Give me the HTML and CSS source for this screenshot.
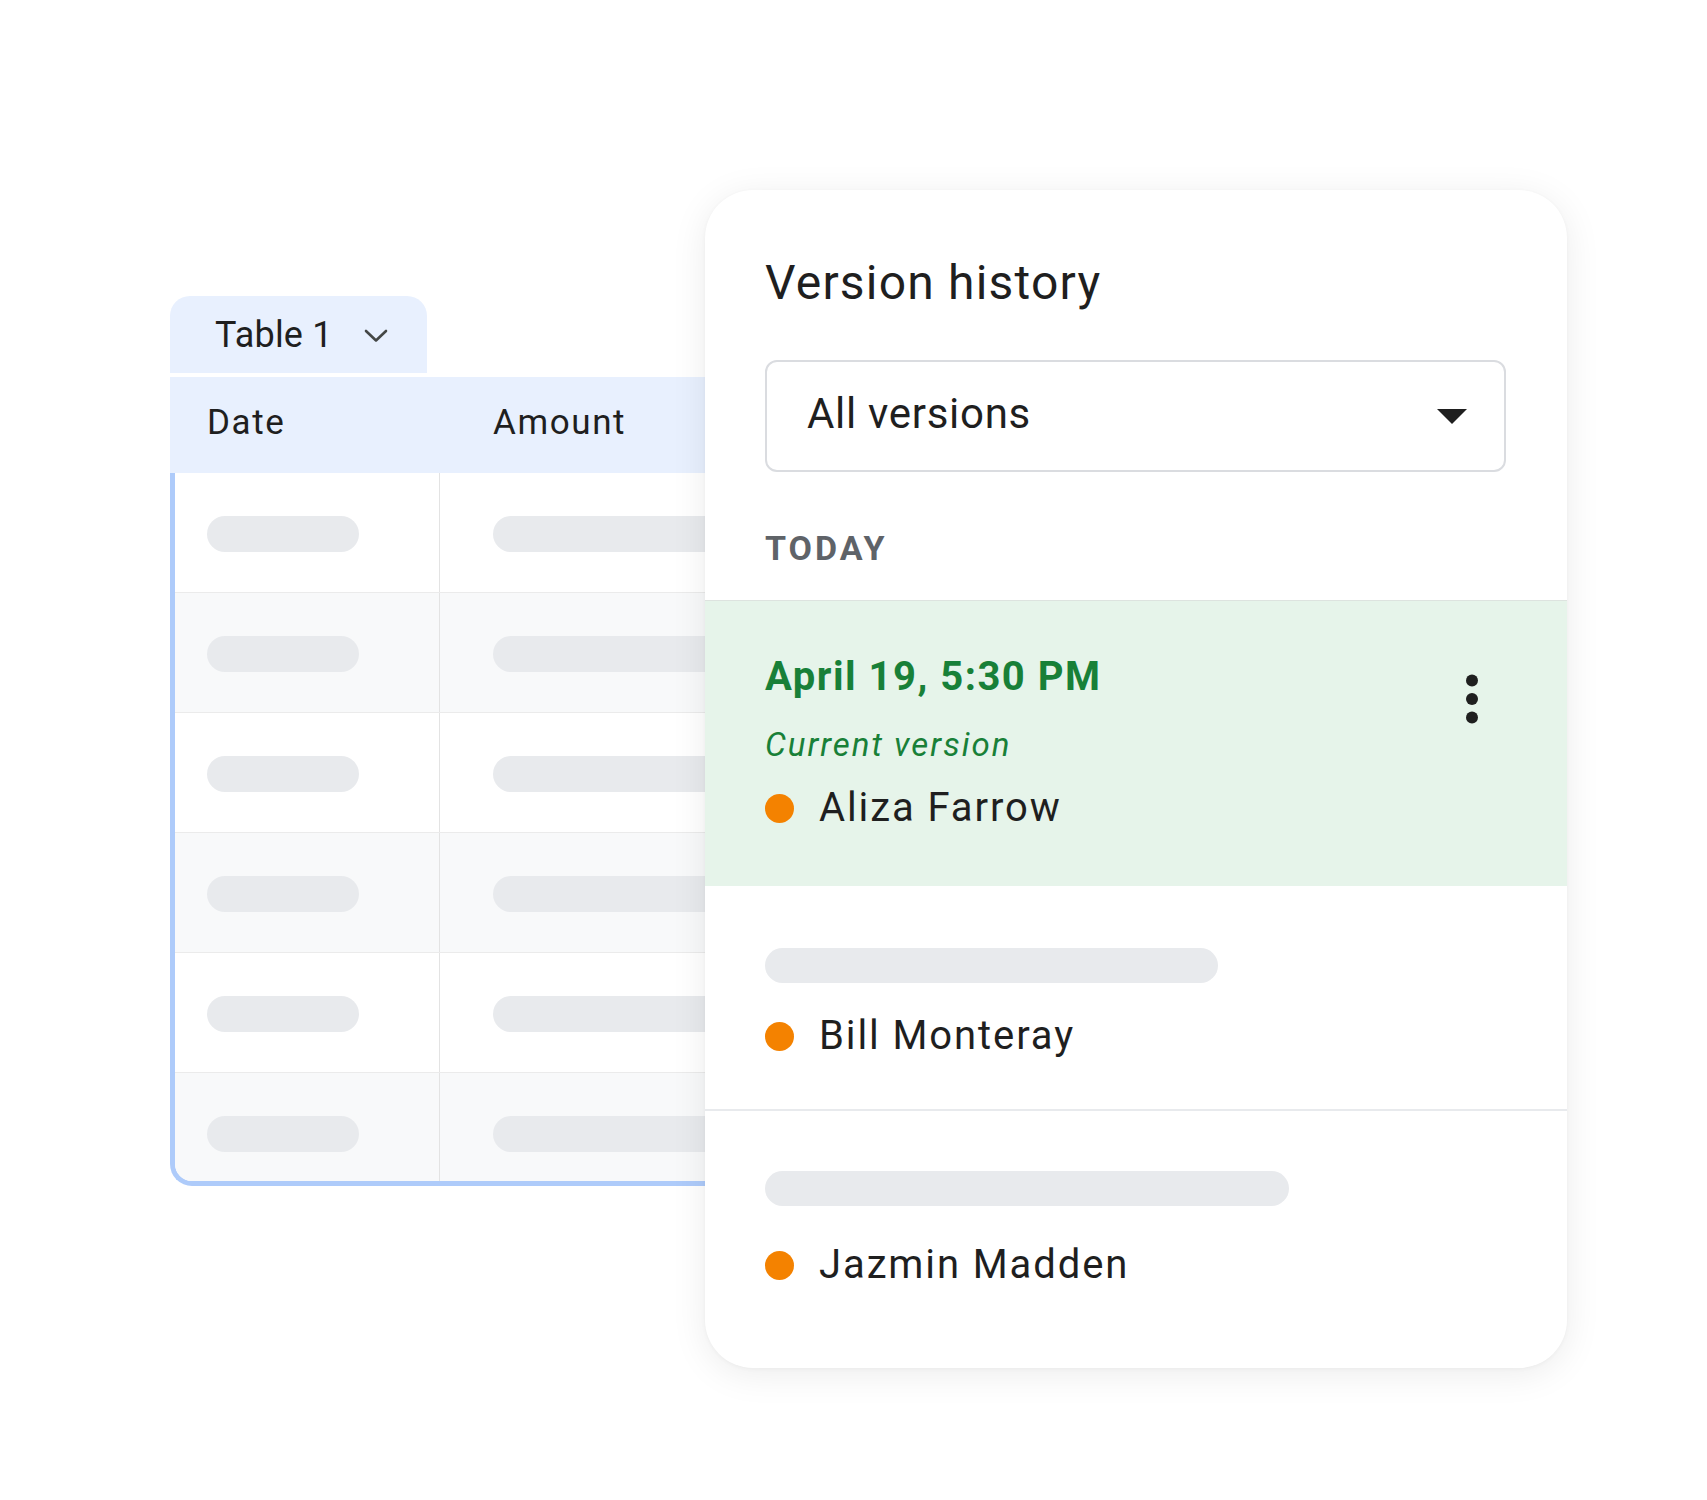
FILE: index.html
```html
<!DOCTYPE html>
<html lang="en">
<head>
<meta charset="utf-8">
<title>Version history</title>
<link rel="stylesheet" href="styles.css">
</head>
<body>
<div class="stage">
  <div class="sheet">
    <div class="tab">
      <span class="tab-label">Table 1</span>
      <svg class="chev" width="24" height="14" viewBox="0 0 24 14"><path d="M2 2 L12 11.5 L22 2" fill="none" stroke="#444746" stroke-width="2.6" stroke-linecap="round" stroke-linejoin="round"/></svg>
    </div>
    <div class="head">
      <div class="hcell c1">Date</div>
      <div class="hcell c2">Amount</div>
    </div>
    <div class="body">
      <div class="row"><div class="cell c1"><span class="pill p1"></span></div><div class="cell c2"><span class="pill p2"></span></div></div>
      <div class="row alt"><div class="cell c1"><span class="pill p1"></span></div><div class="cell c2"><span class="pill p2"></span></div></div>
      <div class="row"><div class="cell c1"><span class="pill p1"></span></div><div class="cell c2"><span class="pill p2"></span></div></div>
      <div class="row alt"><div class="cell c1"><span class="pill p1"></span></div><div class="cell c2"><span class="pill p2"></span></div></div>
      <div class="row"><div class="cell c1"><span class="pill p1"></span></div><div class="cell c2"><span class="pill p2"></span></div></div>
      <div class="row alt last"><div class="cell c1"><span class="pill p1"></span></div><div class="cell c2"><span class="pill p2"></span></div></div>
    </div>
  </div>

  <div class="card">
    <div class="card-top">
      <h1 class="title">Version history</h1>
      <div class="select">
        <span class="select-label">All versions</span>
        <svg class="caret" width="30" height="15" viewBox="0 0 30 15"><path d="M0 0 H30 L15 15 Z" fill="#1f1f1f"/></svg>
      </div>
      <div class="group">TODAY</div>
    </div>
    <div class="entry current">
      <div class="entry-main">
        <div class="when">April 19, 5:30 PM</div>
        <div class="note">Current version</div>
        <div class="who"><span class="dot"></span><span class="name">Aliza Farrow</span></div>
      </div>
      <svg class="more" width="24" height="60" viewBox="0 0 24 60"><circle cx="12" cy="11.5" r="6" fill="#1f1f1f"/><circle cx="12" cy="30" r="6" fill="#1f1f1f"/><circle cx="12" cy="48.5" r="6" fill="#1f1f1f"/></svg>
    </div>
    <div class="entry second">
      <div class="entry-main">
        <span class="bar b1"></span>
        <div class="who"><span class="dot"></span><span class="name">Bill Monteray</span></div>
      </div>
    </div>
    <div class="entry third">
      <div class="entry-main">
        <span class="bar b2"></span>
        <div class="who"><span class="dot"></span><span class="name">Jazmin Madden</span></div>
      </div>
    </div>
  </div>
</div>
</body>
</html>
```

FILE: styles.css
```css
* { box-sizing: border-box; }
html, body {
  margin: 0;
  padding: 0;
  background: #ffffff;
}
body {
  font-family: Roboto, "Noto Sans", "Liberation Sans", sans-serif;
  color: #1f1f1f;
}
.stage {
  position: relative;
  width: 1707px;
  height: 1500px;
  padding: 296px 0 0 170px;
  overflow: hidden;
}

/* ---------- sheet / table ---------- */
.sheet {
  width: 600px;
}
.tab {
  width: 257px;
  height: 77px;
  background: #e8f0fe;
  border-radius: 20px 20px 0 0;
  display: flex;
  align-items: center;
  padding-left: 45px;
  margin-bottom: 4px;
}
.tab-label {
  font-size: 36px;
  line-height: 44px;
  letter-spacing: 0.2px;
}
.chev {
  margin-left: 31px;
  margin-top: 2px;
}
.head {
  height: 96px;
  background: #e8f0fe;
  display: flex;
  align-items: center;
  padding-bottom: 4px;
}
.hcell {
  font-size: 35px;
  line-height: 44px;
  letter-spacing: 1.6px;
}
.hcell.c1 { width: 270px; padding-left: 37px; flex: none; }
.hcell.c2 { padding-left: 53px; }

.body {
  border-left: 5px solid #aecbfa;
  border-bottom: 5px solid #aecbfa;
  border-bottom-left-radius: 22px;
  overflow: hidden;
}
.row {
  display: flex;
  height: 120px;
  border-bottom: 1px solid #ebebeb;
  background: #ffffff;
}
.row.alt { background: #f8f9fa; }
.row.last { height: 108px; border-bottom: 0; }
.cell {
  padding-top: 43px;
}
.cell.c1 {
  flex: none;
  width: 265px;
  padding-left: 32px;
  border-right: 1px solid #e3e3e3;
}
.cell.c2 {
  flex: 1;
  min-width: 0;
  padding-left: 53px;
  overflow: hidden;
}
.pill {
  display: block;
  height: 36px;
  border-radius: 18px;
  background: #e8eaed;
}
.pill.p1 { width: 152px; }
.pill.p2 { width: 320px; }

/* ---------- card ---------- */
.card {
  position: absolute;
  left: 705px;
  top: 190px;
  width: 862px;
  height: 1178px;
  background: #ffffff;
  border-radius: 48px;
  box-shadow: 0 6px 36px rgba(0, 0, 0, 0.08), 0 1px 4px rgba(0, 0, 0, 0.04);
  overflow: hidden;
}
.card-top {
  padding: 63px 61px 0 60px;
  height: 410px;
}
.title {
  margin: 0;
  font-size: 48px;
  line-height: 60px;
  font-weight: 400;
  letter-spacing: 1.2px;
}
.select {
  margin-top: 47px;
  height: 112px;
  border: 2px solid #dadce0;
  border-radius: 12px;
  display: flex;
  align-items: center;
  justify-content: space-between;
  padding: 0 37px 4px 40px;
}
.select-label {
  font-size: 42px;
  line-height: 50px;
  letter-spacing: 0.7px;
}
.caret { margin-top: 4px; }
.group {
  margin-top: 56px;
  font-size: 34px;
  line-height: 40px;
  font-weight: 700;
  color: #5f6368;
  letter-spacing: 3px;
}

.entry {
  display: flex;
  justify-content: space-between;
  align-items: flex-start;
  padding-left: 60px;
}
.entry.current {
  background: #e6f4ea;
  border-top: 1px solid #dde3df;
  height: 286px;
  padding-top: 52px;
}
.entry.second {
  height: 225px;
  padding-top: 62px;
  border-bottom: 2px solid #e8eaed;
}
.entry.third {
  padding-top: 60px;
}
.when {
  font-size: 40px;
  line-height: 48px;
  font-weight: 700;
  color: #188038;
  letter-spacing: 1.5px;
}
.note {
  margin-top: 24px;
  font-size: 33px;
  line-height: 40px;
  font-style: italic;
  color: #188038;
  letter-spacing: 2px;
}
.who {
  display: flex;
  align-items: center;
  height: 48px;
}
.current .who { margin-top: 19px; }
.second .who { margin-top: 29px; }
.third .who { margin-top: 35px; }
.dot {
  width: 29px;
  height: 29px;
  border-radius: 50%;
  background: #f48200;
  margin-right: 25px;
  flex: none;
}
.name {
  font-size: 40px;
  line-height: 48px;
  letter-spacing: 1.9px;
}
.more {
  margin-top: 16px;
  margin-right: 83px;
}
.bar {
  display: block;
  height: 35px;
  border-radius: 18px;
  background: #e8eaed;
}
.bar.b1 { width: 453px; }
.bar.b2 { width: 524px; }
```
